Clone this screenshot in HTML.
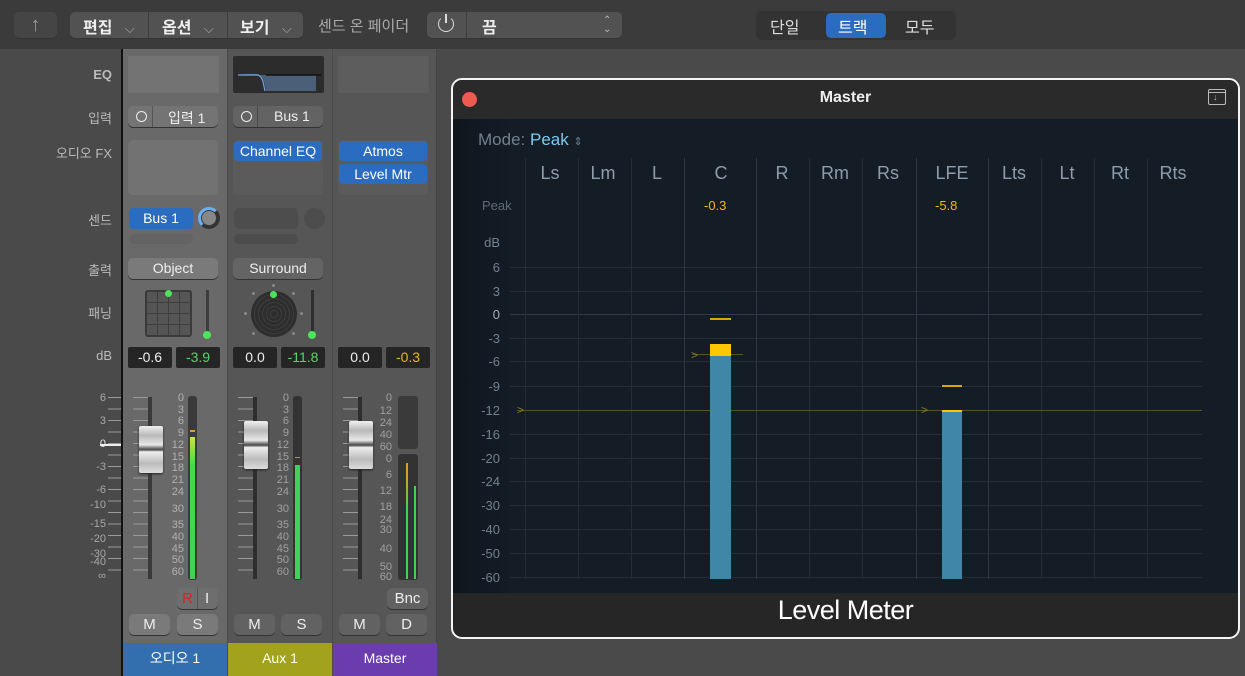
<!DOCTYPE html>
<html><head><meta charset="utf-8"><style>
*{box-sizing:border-box;margin:0;padding:0}
body{width:1245px;height:676px;background:#4a4a4a;font-family:"Liberation Sans","Noto Sans CJK KR",sans-serif;position:relative;overflow:hidden;color:#ddd}
.a{position:absolute}
.btn{position:absolute;background:#656565;border-radius:5px;color:#eee;font-size:14px;text-align:center;box-shadow:0 1px 0 #333}
.blue{position:absolute;background:#2a6cc0;border-radius:4px;color:#fff;font-size:14px;text-align:center;line-height:20px;height:20px}
.lbl{position:absolute;right:1133px;font-size:13px;color:#bbb;text-align:right;white-space:nowrap}
.slot{position:absolute;border-radius:5px}
.fld{position:absolute;background:#252525;height:21px;width:44px;font-size:14px;text-align:center;line-height:21px;border-radius:2px}
.sc{position:absolute;font-size:11px;color:#a8a8a8;text-align:right;width:24px;line-height:11px}
.ms{position:absolute;left:368px;font-size:11px;color:#a0a0a0;text-align:right;width:24px;line-height:11px}
.db{position:absolute;left:460px;width:40px;text-align:right;font-size:13px;color:#71808e;line-height:13px}
.hl{position:absolute;left:510px;width:692px;height:1px;background:#222d38}
.vl{position:absolute;top:158px;width:1px;height:421px;background:#222c37}
.ch{position:absolute;top:163px;font-size:18px;color:#8d9dac;width:60px;text-align:center}
.ticks{position:absolute;width:15px;background:repeating-linear-gradient(#9a9a9a 0 1px,transparent 1px 11.5px)}
</style></head><body>
<!-- top toolbar -->
<div class="a" style="left:0;top:0;width:1245px;height:49px;background:#3b3b3b"></div>
<div class="btn" style="left:14px;top:12px;width:43px;height:26px;background:#454545;color:#999;font-size:20px;line-height:26px">↑</div>
<div class="btn" style="left:70px;top:12px;width:233px;height:26px;background:#525252"></div>
<div class="a" style="left:148px;top:12px;width:1px;height:26px;background:#3e3e3e"></div>
<div class="a" style="left:227px;top:12px;width:1px;height:26px;background:#3e3e3e"></div>
<div class="a" style="left:83px;top:14px;font-size:16px;font-weight:bold;color:#eee">편집 <span style="font-weight:normal;color:#aaa;font-size:13px;margin-left:8px">⌵</span></div>
<div class="a" style="left:162px;top:14px;font-size:16px;font-weight:bold;color:#eee">옵션 <span style="font-weight:normal;color:#aaa;font-size:13px;margin-left:8px">⌵</span></div>
<div class="a" style="left:240px;top:14px;font-size:16px;font-weight:bold;color:#eee">보기 <span style="font-weight:normal;color:#aaa;font-size:13px;margin-left:8px">⌵</span></div>
<div class="a" style="left:318px;top:15px;font-size:15px;color:#aaa">센드 온 페이더</div>
<div class="btn" style="left:427px;top:12px;width:195px;height:26px;background:#525252"></div>
<div class="a" style="left:466px;top:12px;width:1px;height:26px;background:#3e3e3e"></div>
<div class="a" style="left:438px;top:16px;width:16px;height:16px;border:1.5px solid #ddd;border-top-color:transparent;border-radius:50%"></div>
<div class="a" style="left:445px;top:14px;width:2px;height:9px;background:#ddd"></div>
<div class="a" style="left:482px;top:14px;font-size:16px;color:#eee;font-weight:bold">끔</div>
<div class="a" style="left:603px;top:16px;font-size:10px;color:#bbb;line-height:9px">⌃<br>⌄</div>
<div class="a" style="left:756px;top:11px;width:200px;height:29px;background:#333;border-radius:6px"></div>
<div class="a" style="left:826px;top:13px;width:60px;height:25px;background:#2a6cc0;border-radius:5px"></div>
<div class="a" style="left:770px;top:14px;font-size:16px;color:#ddd">단일</div>
<div class="a" style="left:838px;top:14px;font-size:16px;color:#fff">트랙</div>
<div class="a" style="left:905px;top:14px;font-size:16px;color:#ddd">모두</div>

<!-- labels -->
<div class="lbl" style="top:67px;font-weight:bold">EQ</div>
<div class="lbl" style="top:108px">입력</div>
<div class="lbl" style="top:143px">오디오 FX</div>
<div class="lbl" style="top:210px">센드</div>
<div class="lbl" style="top:260px">출력</div>
<div class="lbl" style="top:303px">패닝</div>
<div class="lbl" style="top:348px">dB</div>
<div class="a" style="left:121px;top:49px;width:2px;height:627px;background:#111"></div>

<!-- channel backgrounds -->
<div class="a" style="left:123px;top:49px;width:104px;height:627px;background:#696969"></div>
<div class="a" style="left:227px;top:49px;width:105px;height:627px;background:#565656;border-left:1px solid #4a4a4a"></div>
<div class="a" style="left:332px;top:49px;width:105px;height:627px;background:#565656;border-left:1px solid #4a4a4a;border-right:1px solid #454545"></div>

<!-- EQ -->
<div class="slot" style="left:128px;top:56px;width:91px;height:37px;background:#737373;border-radius:2px"></div>
<div class="slot" style="left:233px;top:56px;width:91px;height:37px;background:#2c2c2c;border-radius:2px"></div>
<svg class="a" style="left:233px;top:56px" width="91" height="37"><path d="M5 18 H24 Q28 18 31 26 L33 35 H83 V19 H24" fill="#4c5f78"/><path d="M5 19 H24 Q28 19 30 26 L32 35" stroke="#6ea6e0" stroke-width="1.2" fill="none"/><path d="M33 19 H88" stroke="#111" stroke-width="1.5"/></svg>
<div class="slot" style="left:338px;top:56px;width:91px;height:37px;background:#5d5d5d;border-radius:2px"></div>

<!-- input -->
<div class="btn" style="left:128px;top:106px;width:90px;height:21px;background:#747474"></div>
<div class="a" style="left:152px;top:106px;width:1px;height:21px;background:#555"></div>
<div class="a" style="left:136px;top:111px;width:11px;height:11px;border:1.5px solid #eee;border-radius:50%"></div>
<div class="a" style="left:168px;top:108px;font-size:14px;color:#eee">입력 1</div>
<div class="btn" style="left:233px;top:106px;width:90px;height:21px;background:#636363"></div>
<div class="a" style="left:257px;top:106px;width:1px;height:21px;background:#4a4a4a"></div>
<div class="a" style="left:241px;top:111px;width:11px;height:11px;border:1.5px solid #eee;border-radius:50%"></div>
<div class="a" style="left:274px;top:108px;font-size:14px;color:#eee">Bus 1</div>

<!-- audio fx -->
<div class="slot" style="left:128px;top:140px;width:90px;height:55px;background:#727272"></div>
<div class="slot" style="left:233px;top:140px;width:90px;height:55px;background:#5b5b5b"></div>
<div class="blue" style="left:234px;top:141px;width:88px">Channel EQ</div>
<div class="slot" style="left:338px;top:140px;width:90px;height:55px;background:#5b5b5b"></div>
<div class="blue" style="left:339px;top:141px;width:88px">Atmos</div>
<div class="blue" style="left:339px;top:164px;width:88px">Level Mtr</div>

<!-- sends -->
<div class="blue" style="left:129px;top:208px;width:64px;height:21px;line-height:21px">Bus 1</div>
<div class="a" style="left:198px;top:207px;width:22px;height:22px;border-radius:50%;background:#3a3a3a;border:3px solid #6ab0f5;border-right-color:#333;border-bottom-color:#333"></div>
<div class="a" style="left:202px;top:211px;width:14px;height:14px;border-radius:50%;background:#888"></div>
<div class="slot" style="left:129px;top:234px;width:64px;height:10px;background:#636363"></div>
<div class="slot" style="left:234px;top:208px;width:64px;height:21px;background:#4d4d4d"></div>
<div class="a" style="left:304px;top:208px;width:21px;height:21px;border-radius:50%;background:#4d4d4d"></div>
<div class="slot" style="left:234px;top:234px;width:64px;height:10px;background:#4d4d4d"></div>

<!-- output -->
<div class="btn" style="left:128px;top:258px;width:90px;height:21px;line-height:21px;background:#7a7a7a">Object</div>
<div class="btn" style="left:233px;top:258px;width:90px;height:21px;line-height:21px;background:#646464">Surround</div>

<!-- panning -->
<div class="a" style="left:145px;top:290px;width:47px;height:47px;background:#555;border:2px solid #3a3a3a;border-radius:3px;background-image:linear-gradient(90deg,transparent 10px,#3e3e3e 10px 11px,transparent 11px 21px,#3e3e3e 21px 22px,transparent 22px 32px,#3e3e3e 32px 33px,transparent 33px),linear-gradient(transparent 10px,#3e3e3e 10px 11px,transparent 11px 21px,#3e3e3e 21px 22px,transparent 22px 32px,#3e3e3e 32px 33px,transparent 33px)"></div>
<div class="a" style="left:165px;top:290px;width:7px;height:7px;border-radius:50%;background:#4de35b"></div>
<div class="a" style="left:206px;top:290px;width:3px;height:44px;background:#3e3e3e"></div>
<div class="a" style="left:203px;top:331px;width:8px;height:8px;border-radius:50%;background:#4de35b"></div>
<div class="a" style="left:251px;top:291px;width:46px;height:46px;border-radius:50%;background:repeating-radial-gradient(circle,#2e2e2e 0 3px,#3c3c3c 3px 4px)"></div>
<div class="a" style="left:270px;top:291px;width:7px;height:7px;border-radius:50%;background:#4de35b"></div>
<div class="a" style="left:311px;top:290px;width:3px;height:44px;background:#2e2e2e"></div>
<div class="a" style="left:308px;top:331px;width:8px;height:8px;border-radius:50%;background:#4de35b"></div>
<div class="a" style="left:272px;top:284px;width:3px;height:3px;border-radius:50%;background:#888"></div>
<div class="a" style="left:244px;top:312px;width:3px;height:3px;border-radius:50%;background:#888"></div>
<div class="a" style="left:300px;top:312px;width:3px;height:3px;border-radius:50%;background:#888"></div>
<div class="a" style="left:252px;top:292px;width:3px;height:3px;border-radius:50%;background:#888"></div>
<div class="a" style="left:292px;top:292px;width:3px;height:3px;border-radius:50%;background:#888"></div>
<div class="a" style="left:252px;top:332px;width:3px;height:3px;border-radius:50%;background:#888"></div>
<div class="a" style="left:292px;top:332px;width:3px;height:3px;border-radius:50%;background:#888"></div>

<!-- dB fields -->
<div class="fld" style="left:128px;top:347px;color:#eee">-0.6</div>
<div class="fld" style="left:176px;top:347px;color:#5bd36a">-3.9</div>
<div class="fld" style="left:233px;top:347px;color:#eee">0.0</div>
<div class="fld" style="left:281px;top:347px;color:#5bd36a">-11.8</div>
<div class="fld" style="left:338px;top:347px;color:#eee">0.0</div>
<div class="fld" style="left:386px;top:347px;color:#e8b820">-0.3</div>

<!-- left scale -->
<div class="sc" style="left:82px;top:393px">6</div>
<div class="sc" style="left:82px;top:416px">3</div>
<div class="sc" style="left:82px;top:439px;color:#eee">0</div>
<div class="sc" style="left:82px;top:462px">-3</div>
<div class="sc" style="left:82px;top:485px">-6</div>
<div class="sc" style="left:82px;top:500px">-10</div>
<div class="sc" style="left:82px;top:519px">-15</div>
<div class="sc" style="left:82px;top:534px">-20</div>
<div class="sc" style="left:82px;top:549px">-30</div>
<div class="sc" style="left:82px;top:557px">-40</div>
<div class="sc" style="left:82px;top:571px">∞</div>
<div class="ticks" style="left:108px;top:397px;height:183px;width:13px"></div>
<div class="a" style="left:100px;top:444px;width:21px;height:2px;background:#eee"></div>

<!-- faders -->
<div class="ticks" style="left:133px;top:397px;height:183px"></div>
<div class="a" style="left:148px;top:397px;width:4px;height:182px;background:#3a3a3a"></div>
<div class="a" style="left:139px;top:426px;width:24px;height:47px;border-radius:2px;background:linear-gradient(#f0f0f0,#b8b8b8 20%,#e8e8e8 40%,#555 49%,#555 51%,#eee 55%,#bbb 80%,#ddd);box-shadow:0 1px 2px #222"></div>
<div class="ticks" style="left:238px;top:397px;height:183px"></div>
<div class="a" style="left:253px;top:397px;width:4px;height:182px;background:#2e2e2e"></div>
<div class="a" style="left:244px;top:421px;width:24px;height:48px;border-radius:2px;background:linear-gradient(#f0f0f0,#b8b8b8 20%,#e8e8e8 40%,#555 49%,#555 51%,#eee 55%,#bbb 80%,#ddd);box-shadow:0 1px 2px #222"></div>
<div class="ticks" style="left:343px;top:397px;height:183px"></div>
<div class="a" style="left:358px;top:397px;width:4px;height:182px;background:#2e2e2e"></div>
<div class="a" style="left:349px;top:421px;width:24px;height:48px;border-radius:2px;background:linear-gradient(#f0f0f0,#b8b8b8 20%,#e8e8e8 40%,#555 49%,#555 51%,#eee 55%,#bbb 80%,#ddd);box-shadow:0 1px 2px #222"></div>

<!-- meter scales -->
<div class="a" style="left:160px;top:393px;width:24px;font-size:11px;line-height:11.7px;color:#b0b0b0;text-align:right">0<br>3<br>6<br>9<br>12<br>15<br>18<br>21<br>24<br><span style="line-height:22px">30</span><br>35<br>40<br>45<br>50<br>60</div>
<div class="a" style="left:265px;top:393px;width:24px;font-size:11px;line-height:11.7px;color:#a0a0a0;text-align:right">0<br>3<br>6<br>9<br>12<br>15<br>18<br>21<br>24<br><span style="line-height:22px">30</span><br>35<br>40<br>45<br>50<br>60</div>
<div class="a" style="left:188px;top:396px;width:9px;height:184px;background:#3a3a3a;border-radius:3px"></div>
<div class="a" style="left:190px;top:437px;width:5px;height:142px;background:linear-gradient(#c9e43a,#45d855 20%,#3fd256)"></div>
<div class="a" style="left:190px;top:430px;width:5px;height:2px;background:#e0a020"></div>
<div class="a" style="left:293px;top:396px;width:9px;height:184px;background:#333;border-radius:3px"></div>
<div class="a" style="left:295px;top:465px;width:5px;height:114px;background:#3fd256"></div>
<div class="a" style="left:295px;top:457px;width:5px;height:1px;background:#3fd256"></div>
<div class="ms" style="top:393px">0</div><div class="ms" style="top:406px">12</div><div class="ms" style="top:418px">24</div><div class="ms" style="top:430px">40</div><div class="ms" style="top:442px">60</div>
<div class="ms" style="top:454px">0</div><div class="ms" style="top:470px">6</div><div class="ms" style="top:486px">12</div><div class="ms" style="top:502px">18</div><div class="ms" style="top:515px">24</div><div class="ms" style="top:525px">30</div><div class="ms" style="top:544px">40</div><div class="ms" style="top:562px">50</div><div class="ms" style="top:572px">60</div>
<div class="a" style="left:398px;top:396px;width:20px;height:53px;background:#3a3a3a;border-radius:3px"></div>
<div class="a" style="left:398px;top:454px;width:20px;height:126px;background:#333;border-radius:3px"></div>
<div class="a" style="left:406px;top:463px;width:2px;height:116px;background:linear-gradient(#d8a020 10%,#3fd256 40%)"></div>
<div class="a" style="left:414px;top:486px;width:2px;height:93px;background:#3fd256"></div>

<!-- buttons -->
<div class="btn" style="left:177px;top:588px;width:41px;height:21px;background:#6e6e6e"></div>
<div class="a" style="left:197px;top:588px;width:1px;height:21px;background:#555"></div>
<div class="a" style="left:182px;top:590px;font-size:15px;color:#d22">R</div>
<div class="a" style="left:205px;top:590px;font-size:15px;color:#eee">I</div>
<div class="btn" style="left:387px;top:588px;width:41px;height:21px;line-height:21px;background:#626262;font-size:15px">Bnc</div>
<div class="btn" style="left:129px;top:614px;width:41px;height:21px;line-height:21px;background:#7a7a7a;font-size:15px">M</div>
<div class="btn" style="left:177px;top:614px;width:41px;height:21px;line-height:21px;background:#7a7a7a;font-size:15px">S</div>
<div class="btn" style="left:234px;top:614px;width:41px;height:21px;line-height:21px;background:#626262;font-size:15px">M</div>
<div class="btn" style="left:281px;top:614px;width:41px;height:21px;line-height:21px;background:#626262;font-size:15px">S</div>
<div class="btn" style="left:339px;top:614px;width:41px;height:21px;line-height:21px;background:#626262;font-size:15px">M</div>
<div class="btn" style="left:386px;top:614px;width:41px;height:21px;line-height:21px;background:#626262;font-size:15px">D</div>

<!-- names -->
<div class="a" style="left:123px;top:643px;width:104px;height:33px;background:#336eaf;color:#fff;font-size:14px;text-align:center;line-height:30px">오디오 1</div>
<div class="a" style="left:228px;top:643px;width:104px;height:33px;background:#a2a21c;color:#fff;font-size:14px;text-align:center;line-height:30px">Aux 1</div>
<div class="a" style="left:333px;top:643px;width:104px;height:33px;background:#6a3cae;color:#fff;font-size:14px;text-align:center;line-height:30px">Master</div>

<!-- plugin window -->
<div class="a" style="left:451px;top:78px;width:789px;height:561px;border:2px solid #f4f4f4;border-radius:11px;background:#262626;overflow:hidden">
  <div class="a" style="left:0;top:0;width:785px;height:39px;background:#2a2a2a"></div>
  <div class="a" style="left:0;top:39px;width:785px;height:474px;background:linear-gradient(90deg,#0f161e,#141c26 8%,#141c26)"></div>
  <div class="a" style="left:9px;top:12px;width:15px;height:15px;border-radius:50%;background:#ee5a52"></div>
  <div class="a" style="left:0;top:9px;width:785px;text-align:center;font-size:16px;font-weight:bold;color:#eee">Master</div>
  <div class="a" style="left:755px;top:9px;width:18px;height:16px;border:1.3px solid #bbb;border-radius:2px"></div>
  <div class="a" style="left:755px;top:12px;width:18px;height:1px;background:#bbb"></div>
  <div class="a" style="left:760px;top:12px;font-size:9px;color:#bbb">↓</div>
  <div class="a" style="left:0;top:515px;width:785px;text-align:center;font-size:27px;color:#fff;letter-spacing:-0.5px">Level Meter</div>
</div>
<div class="a" style="left:478px;top:130px;font-size:17px;color:#71808e">Mode: <span style="color:#7ccaf0">Peak</span> <span style="font-size:11px">⇕</span></div>

<!-- grid -->
<div class="hl" style="top:267px"></div><div class="hl" style="top:291px"></div><div class="hl" style="top:314px;background:#2e3b48"></div><div class="hl" style="top:338px"></div><div class="hl" style="top:361px"></div><div class="hl" style="top:386px"></div><div class="hl" style="top:434px"></div><div class="hl" style="top:458px"></div><div class="hl" style="top:481px"></div><div class="hl" style="top:505px"></div><div class="hl" style="top:529px"></div><div class="hl" style="top:553px"></div><div class="hl" style="top:577px"></div>
<div class="vl" style="left:525px"></div><div class="vl" style="left:578px"></div><div class="vl" style="left:631px"></div><div class="vl" style="left:684px;background:#2b3845"></div><div class="vl" style="left:756px;background:#2b3845"></div><div class="vl" style="left:809px"></div><div class="vl" style="left:862px"></div><div class="vl" style="left:916px;background:#2b3845"></div><div class="vl" style="left:988px;background:#2b3845"></div><div class="vl" style="left:1041px"></div><div class="vl" style="left:1094px"></div><div class="vl" style="left:1147px"></div>
<div class="ch" style="left:520px">Ls</div><div class="ch" style="left:573px">Lm</div><div class="ch" style="left:627px">L</div><div class="ch" style="left:691px">C</div><div class="ch" style="left:752px">R</div><div class="ch" style="left:805px">Rm</div><div class="ch" style="left:858px">Rs</div><div class="ch" style="left:922px">LFE</div><div class="ch" style="left:984px">Lts</div><div class="ch" style="left:1037px">Lt</div><div class="ch" style="left:1090px">Rt</div><div class="ch" style="left:1143px">Rts</div>
<div class="a" style="left:482px;top:198px;font-size:13px;color:#5d6b78">Peak</div>
<div class="a" style="left:704px;top:198px;font-size:13px;color:#f0b818">-0.3</div>
<div class="a" style="left:935px;top:198px;font-size:13px;color:#f0b818">-5.8</div>
<div class="db" style="top:236px">dB</div>
<div class="db" style="top:261px">6</div><div class="db" style="top:285px">3</div><div class="db" style="top:308px;color:#a0b0be">0</div><div class="db" style="top:332px">-3</div><div class="db" style="top:355px">-6</div><div class="db" style="top:380px">-9</div><div class="db" style="top:404px">-12</div><div class="db" style="top:428px">-16</div><div class="db" style="top:452px">-20</div><div class="db" style="top:475px">-24</div><div class="db" style="top:499px">-30</div><div class="db" style="top:523px">-40</div><div class="db" style="top:547px">-50</div><div class="db" style="top:571px">-60</div>

<!-- bars -->
<div class="a" style="left:517px;top:410px;width:685px;height:1px;background:#5a5126"></div>
<div class="a" style="left:517px;top:404px;font-size:12px;color:#8a7a30;line-height:12px">&gt;</div>
<div class="a" style="left:692px;top:354px;width:51px;height:1px;background:#5a5126"></div>
<div class="a" style="left:691px;top:349px;font-size:12px;color:#8a7a30;line-height:12px">&gt;</div>
<div class="a" style="left:921px;top:404px;font-size:12px;color:#8a7a30;line-height:12px">&gt;</div>
<div class="a" style="left:710px;top:344px;width:21px;height:12px;background:#fcc800"></div>
<div class="a" style="left:710px;top:356px;width:21px;height:223px;background:#3f86a8"></div>
<div class="a" style="left:710px;top:318px;width:21px;height:2px;background:#d8a800"></div>
<div class="a" style="left:942px;top:410px;width:20px;height:2px;background:#fcc800"></div>
<div class="a" style="left:942px;top:412px;width:20px;height:167px;background:#3f86a8"></div>
<div class="a" style="left:942px;top:385px;width:20px;height:2px;background:#d8a800"></div>
</body></html>
